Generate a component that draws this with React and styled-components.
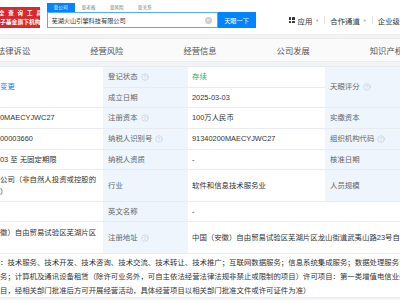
import React from 'react';
import styled, { createGlobalStyle } from 'styled-components';
import { CircleHelp } from 'lucide-react';

const Global = createGlobalStyle`
  html, body { margin: 0; padding: 0; }
  body {
    width: 400px;
    height: 300px;
    overflow: hidden;
    background: #f3f4f6;
    font-family: "Liberation Sans", "Noto Sans CJK SC", sans-serif;
    color: #333;
  }
`;

const Page = styled.div`
  width: 400px;
  height: 300px;
  overflow: hidden;
  display: flex;
  flex-direction: column;
`;

const Header = styled.header`
  height: 35px;
  flex-shrink: 0;
  background: #fff;
  display: flex;
  align-items: flex-start;
  border-bottom: 1px solid #ececec;
  box-sizing: border-box;
`;

const Logo = styled.div`
  margin-top: 7px;
  width: 45px;
  height: 21px;
  background: #d9282f;
  color: #fff;
  display: flex;
  flex-direction: column;
  justify-content: center;
  overflow: hidden;
  white-space: nowrap;
  font-weight: 700;
`;

const LogoLine = styled.div`
  font-size: ${p => p.$size}px;
  letter-spacing: ${p => p.$spacing || 0}px;
  line-height: 8.5px;
  margin-left: ${p => p.$shift || 0}px;
`;

const SearchBlock = styled.div`
  margin-left: 7px;
  padding-top: 3px;
  display: flex;
  flex-direction: column;
`;

const Tabs = styled.div`
  display: flex;
  height: 9px;
`;

const Tab = styled.div`
  padding: 0 7px;
  height: 9px;
  line-height: 9px;
  font-size: 4.7px;
  color: ${p => (p.$active ? '#fff' : '#777')};
  background: ${p => (p.$active ? '#0084ff' : 'transparent')};
`;

const SearchRow = styled.div`
  display: flex;
  height: 16px;
`;

const SearchInput = styled.div`
  width: 171px;
  height: 16px;
  box-sizing: border-box;
  border: 1px solid #55a8ff;
  display: flex;
  align-items: center;
  justify-content: space-between;
  padding: 0 5px 0 4px;
  font-size: 6.2px;
  color: #333;
`;

const ClearIcon = styled.span`
  width: 7px;
  height: 7px;
  border-radius: 50%;
  background: #cfcfcf;
  color: #fff;
  font-size: 5px;
  line-height: 7px;
  text-align: center;
`;

const SearchButton = styled.div`
  width: 38px;
  height: 16px;
  background: #0084ff;
  color: #fff;
  font-size: 6.2px;
  display: flex;
  align-items: center;
  justify-content: center;
`;

const TopNav = styled.div`
  margin-left: 33px;
  margin-top: 12px;
  height: 16px;
  display: flex;
  align-items: center;
  white-space: nowrap;
  font-size: 7.4px;
  color: #333;
`;

const GridIcon = styled.span`
  display: grid;
  grid-template-columns: 2.5px 2.5px;
  gap: 1px;
  margin-right: 3px;
  span { width: 2.5px; height: 2.5px; background: #333; border-radius: 0.5px; }
`;

const Caret = styled.span`
  font-size: 4px;
  color: #aaa;
  margin-left: 3px;
`;

const Sep = styled.span`
  width: 1px;
  height: 8px;
  background: #e2e2e2;
  margin: 0 5px;
`;

const Nav = styled.nav`
  margin-top: 3px;
  height: 24px;
  flex-shrink: 0;
  background: #fafafa;
  border-top: 1px solid #ececec;
  border-bottom: 1px solid #ececec;
  box-sizing: border-box;
  display: flex;
  align-items: center;
  gap: 60px;
  padding-left: 0;
  margin-left: -3px;
  white-space: nowrap;
  font-size: 8.3px;
  color: #555;
`;

const Table = styled.div`
  margin-top: 4px;
  width: 620px;
  background: #fff;
  border-top: 1px solid #e8ebef;
  display: grid;
  grid-template-columns: 103px 85px 137px 80px 215px;
  grid-template-rows: 21px 20px 21px 21px 20px 32px 20px 32px 44px;
  font-size: 7.4px;
`;

const Cell = styled.div`
  box-sizing: border-box;
  border-bottom: 1px solid #e8ebef;
  display: flex;
  align-items: ${p => (p.$top ? 'flex-start' : 'center')};
  padding-top: ${p => (p.$top ? 5 : 0)}px;
  padding-left: ${p => (p.$kind === 'label' ? 5 : p.$kind === 'value' ? 4 : 0)}px;
  background: ${p => (p.$kind === 'label' ? '#eef5fd' : '#fff')};
  color: ${p => (p.$kind === 'label' ? '#666' : p.$color || '#333')};
  grid-row: ${p => p.$row || 'auto'};
  grid-column: ${p => p.$col || 'auto'};
  white-space: nowrap;
  overflow: hidden;
  line-height: 12px;
`;

const Lines = styled.div`
  display: flex;
  flex-direction: column;
`;

const Help = styled(CircleHelp)`
  margin-left: 3px;
  color: #b9c5d3;
  flex-shrink: 0;
`;

const Scope = styled.div`
  grid-column: 1 / -1;
  box-sizing: border-box;
  border-bottom: 1px solid #e8ebef;
  padding-top: 2px;
  display: flex;
  flex-direction: column;
  color: #333;
  white-space: nowrap;
  overflow: hidden;
  line-height: 14px;
`;

const Label = ({ children, help, row, col }) => (
  <Cell $kind="label" $row={row} $col={col}>
    {children}
    {help && <Help size={8} strokeWidth={1.6} />}
  </Cell>
);

export default function App() {
  return (
    <Page>
      <Global />
      <Header>
        <Logo>
          <LogoLine $size={5.5} $spacing={3.8} $shift={-1}>全查询工具</LogoLine>
          <LogoLine $size={5.8}>子基金旗下机构</LogoLine>
        </Logo>
        <SearchBlock>
          <Tabs>
            <Tab $active>查公司</Tab>
            <Tab>查老板</Tab>
            <Tab>查风险</Tab>
            <Tab>查关系</Tab>
          </Tabs>
          <SearchRow>
            <SearchInput>
              <span>芜湖火山引擎科技有限公司</span>
              <ClearIcon>×</ClearIcon>
            </SearchInput>
            <SearchButton>天眼一下</SearchButton>
          </SearchRow>
        </SearchBlock>
        <TopNav>
          <GridIcon><span /><span /><span /><span /></GridIcon>
          应用<Caret>▼</Caret>
          <Sep />
          合作通道<Caret>▼</Caret>
          <Sep />
          企业级
        </TopNav>
      </Header>

      <Nav>
        <span>法律诉讼</span>
        <span>经营风险</span>
        <span>经营信息</span>
        <span>公司发展</span>
        <span>知识产权</span>
      </Nav>

      <Table>
        <Cell $row="1 / 3" $col="1" $color="#0084ff">变更</Cell>
        <Label row="1" col="2" help>登记状态</Label>
        <Cell $kind="value" $row="1" $col="3" $color="#2fae68">存续</Cell>
        <Label row="1 / 3" col="4" help>天眼评分</Label>
        <Cell $kind="value" $row="1 / 3" $col="5" />

        <Label row="2" col="2">成立日期</Label>
        <Cell $kind="value" $row="2" $col="3">2025-03-03</Cell>

        <Cell $row="3" $col="1">0MAECYJWC27</Cell>
        <Label row="3" col="2" help>注册资本</Label>
        <Cell $kind="value" $row="3" $col="3">100万人民币</Cell>
        <Label row="3" col="4">实缴资本</Label>
        <Cell $kind="value" $row="3" $col="5" />

        <Cell $row="4" $col="1">00003660</Cell>
        <Label row="4" col="2" help>纳税人识别号</Label>
        <Cell $kind="value" $row="4" $col="3">91340200MAECYJWC27</Cell>
        <Label row="4" col="4" help>组织机构代码</Label>
        <Cell $kind="value" $row="4" $col="5" />

        <Cell $row="5" $col="1">03 至 无固定期限</Cell>
        <Label row="5" col="2">纳税人资质</Label>
        <Cell $kind="value" $row="5" $col="3">-</Cell>
        <Label row="5" col="4">核准日期</Label>
        <Cell $kind="value" $row="5" $col="5" />

        <Cell $row="6" $col="1">
          <Lines>
            <span>公司（非自然人投资或控股的</span>
            <span>）</span>
          </Lines>
        </Cell>
        <Label row="6" col="2">行业</Label>
        <Cell $kind="value" $row="6" $col="3">软件和信息技术服务业</Cell>
        <Label row="6" col="4">人员规模</Label>
        <Cell $kind="value" $row="6" $col="5" />

        <Cell $row="7" $col="1" />
        <Label row="7" col="2">英文名称</Label>
        <Cell $kind="value" $row="7" $col="3 / 6">-</Cell>

        <Cell $row="8" $col="1" $top>徽）自由贸易试验区芜湖片区</Cell>
        <Label row="8" col="2" help>注册地址</Label>
        <Cell $kind="value" $row="8" $col="3 / 6">中国（安徽）自由贸易试验区芜湖片区龙山街道武夷山路23号自贸大厦</Cell>

        <Scope>
          <span>：技术服务、技术开发、技术咨询、技术交流、技术转让、技术推广；互联网数据服务；信息系统集成服务；数据处理服务；软件开发</span>
          <span>务；计算机及通讯设备租赁（除许可业务外，可自主依法经营法律法规非禁止或限制的项目）许可项目：第一类增值电信业务</span>
          <span>目，经相关部门批准后方可开展经营活动，具体经营项目以相关部门批准文件或许可证件为准）</span>
        </Scope>
      </Table>
    </Page>
  );
}
